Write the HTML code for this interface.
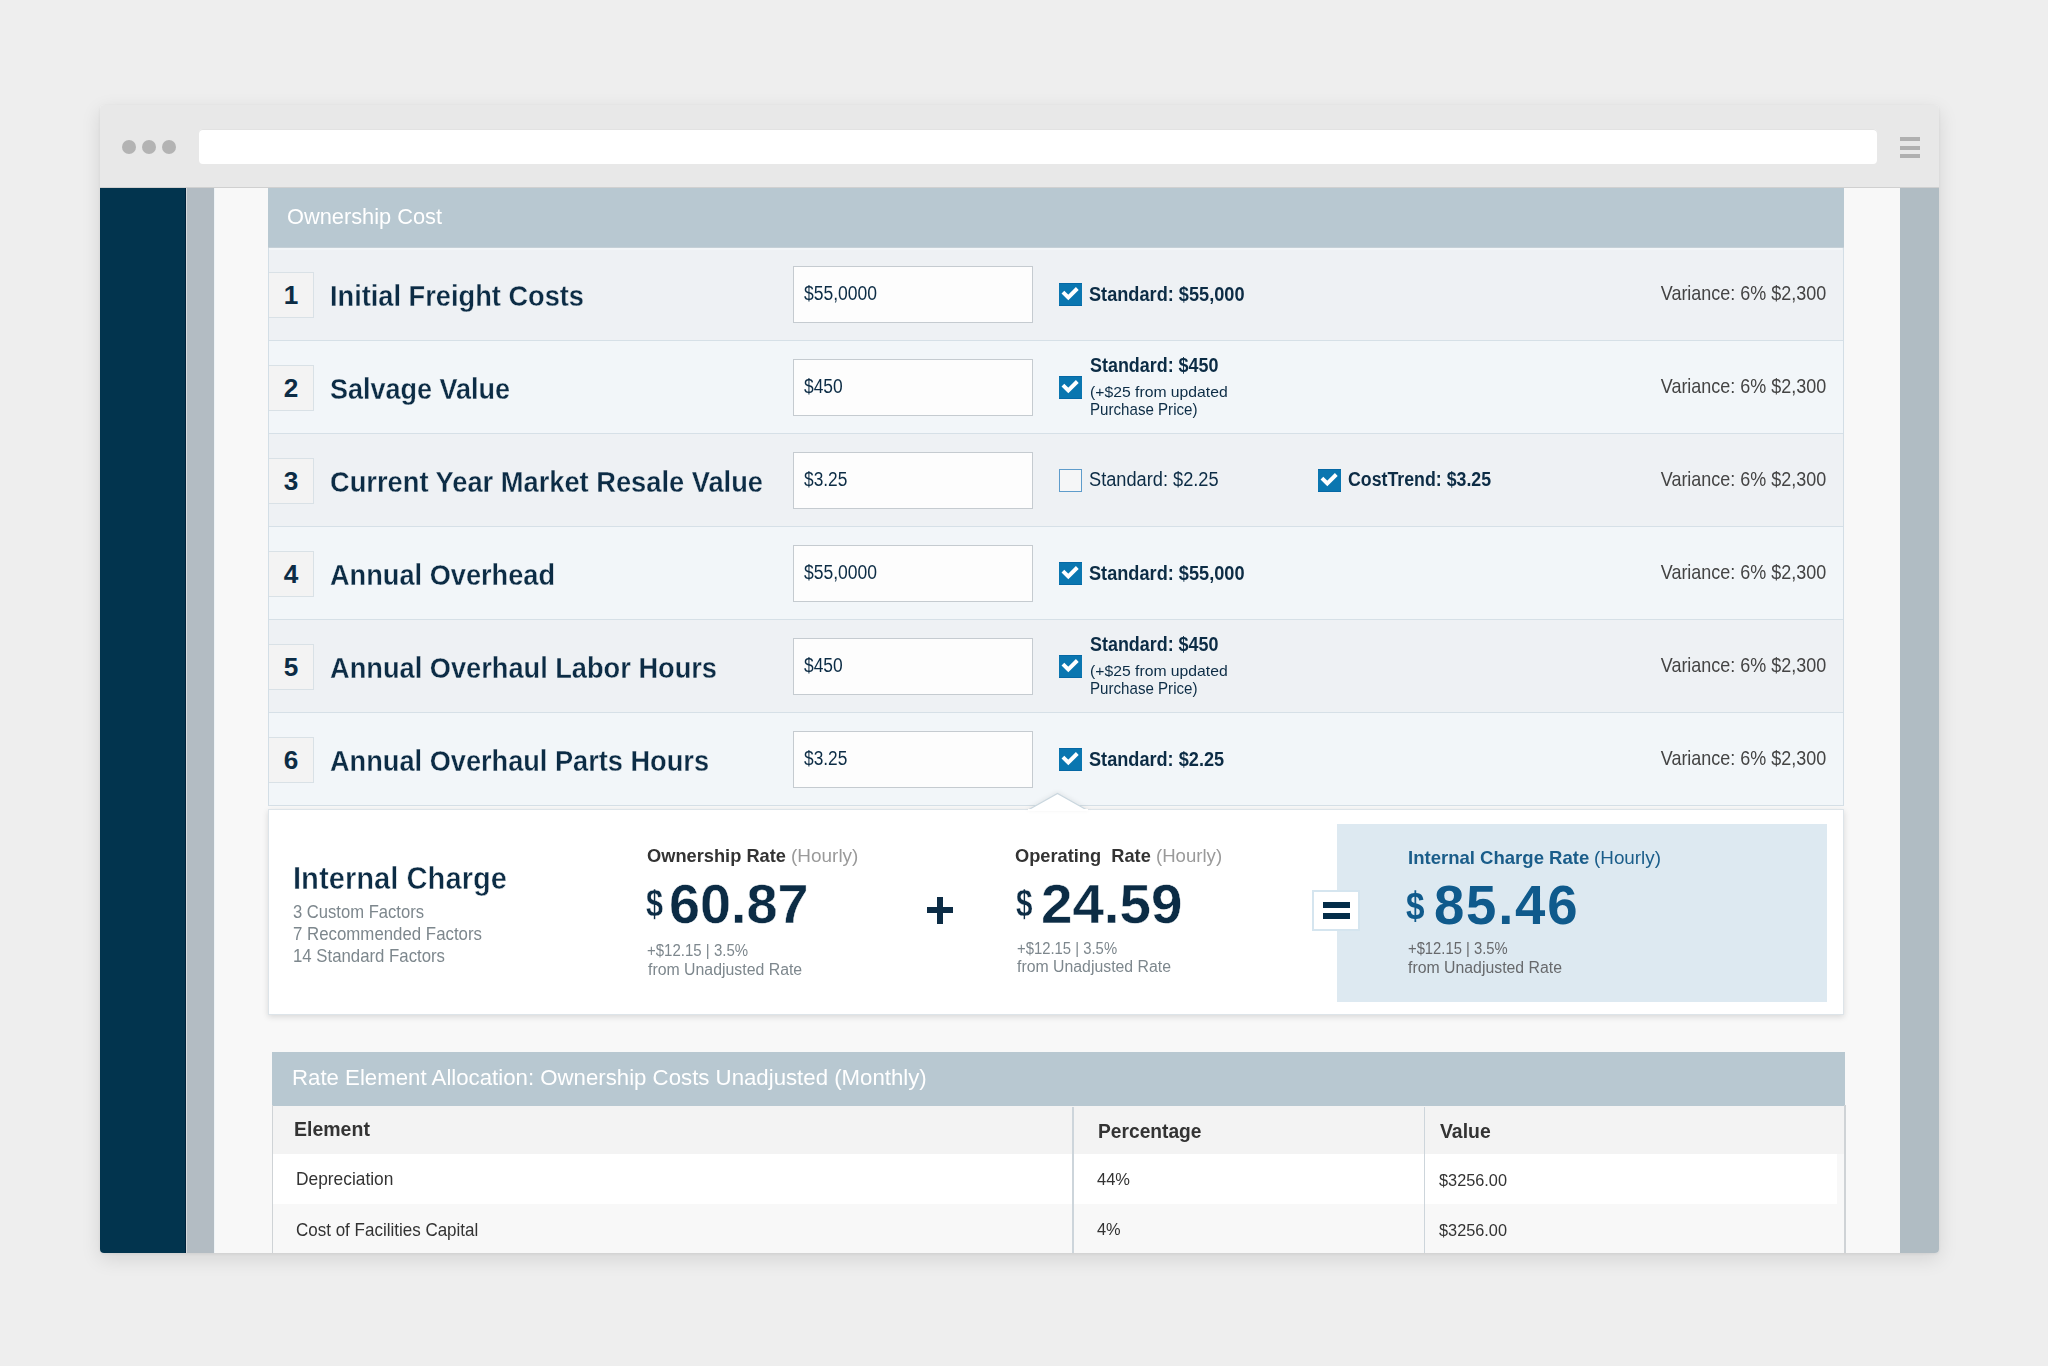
<!DOCTYPE html>
<html><head><meta charset="utf-8">
<style>
html,body{margin:0;padding:0}
body{width:2048px;height:1366px;overflow:hidden;background:#eeeeee;position:relative;font-family:"Liberation Sans",sans-serif}
.a{position:absolute}
.t{position:absolute;line-height:1;white-space:pre;font-family:"Liberation Sans",sans-serif}
.frame{position:absolute;left:100px;top:105px;width:1839px;height:1148px;border-radius:4px;overflow:hidden;background:#f8f8f8;box-shadow:0 6px 20px rgba(0,0,0,0.11),0 1px 3px rgba(0,0,0,0.06)}
.dot{position:absolute;width:14px;height:14px;border-radius:50%;background:#b3b3b3;top:139.5px}
.hb{position:absolute;left:1900px;width:20px;height:4px;background:#b0b0b0}
.row{position:absolute;left:268px;width:1576px;height:92px;border-bottom:1px solid #d6e0e7}
.odd{background:#eef1f4}
.even{background:#f2f6f9}
.nbox{position:absolute;left:268px;width:45px;height:44px;background:#f3f3f3;border:1px solid #d9e1e6;border-left:none}
.inp{position:absolute;left:793px;width:240px;height:57px;box-sizing:border-box;background:#fdfdfd;border:1px solid #c5cbd0}
.cb{position:absolute;width:23px;height:23px;background:#0a76b0;box-shadow:inset 0 1px #0568a5,inset 0 -1px #0568a5}
.cb svg{position:absolute;left:0;top:0}
.cbu{position:absolute;width:21px;height:21px;background:#f5f6f7;border:1px solid #5e9ccb}
</style></head><body>
<div class="frame"></div>
<!-- top bar -->
<div class="a" style="left:100px;top:105px;width:1839px;height:82px;background:#e8e8e8;border-radius:4px 4px 0 0"></div>
<div class="a" style="left:100px;top:187px;width:1839px;height:1px;background:#d0d0d0"></div>
<div class="dot" style="left:121.7px"></div>
<div class="dot" style="left:141.8px"></div>
<div class="dot" style="left:162px"></div>
<div class="a" style="left:199px;top:129px;width:1678px;height:35px;background:#ffffff;border-radius:4px;box-shadow:inset 0 1px 0 #e2e2e2"></div>
<div class="hb" style="top:137px"></div>
<div class="hb" style="top:145.5px"></div>
<div class="hb" style="top:154px"></div>
<!-- content columns -->
<div class="a" style="left:100px;top:188px;width:86px;height:1065px;background:#02344e;border-radius:0 0 0 4px"></div>
<div class="a" style="left:186px;top:188px;width:28px;height:1065px;background:#b3bcc3"></div>
<div class="a" style="left:185px;top:188px;width:1px;height:1065px;background:#00213a"></div>
<div class="a" style="left:186px;top:188px;width:1px;height:1065px;background:#d6dadd"></div>
<div class="a" style="left:214px;top:188px;width:1px;height:1065px;background:#eef3f6"></div>
<div class="a" style="left:1900px;top:188px;width:39px;height:1065px;background:#b0bcc3;border-radius:0 0 4px 0"></div>
<!-- panel -->
<div class="a" style="left:268px;top:188px;width:1576px;height:60px;background:#b8c8d1"></div>
<div class="row odd" style="top:248px"></div>
<div class="row even" style="top:341px"></div>
<div class="row odd" style="top:434px"></div>
<div class="row even" style="top:527px"></div>
<div class="row odd" style="top:620px"></div>
<div class="row even" style="top:713px"></div>
<!-- number boxes -->
<div class="nbox" style="top:272px"></div>
<div class="nbox" style="top:365px"></div>
<div class="nbox" style="top:458px"></div>
<div class="nbox" style="top:551px"></div>
<div class="nbox" style="top:644px"></div>
<div class="nbox" style="top:737px"></div>
<div class="a" style="left:268px;top:248px;width:1px;height:558px;background:#d3dee6"></div>
<div class="a" style="left:1843px;top:248px;width:1px;height:558px;background:#d3dee6"></div>
<div class="a" style="left:268px;top:247px;width:1576px;height:1px;background:#c5d0d7"></div>
<div class="a" style="left:269px;top:248px;width:1573px;height:1.5px;background:#f3f6f8"></div>
<!-- inputs -->
<div class="inp" style="top:266px"></div>
<div class="inp" style="top:359px"></div>
<div class="inp" style="top:452px"></div>
<div class="inp" style="top:545px"></div>
<div class="inp" style="top:638px"></div>
<div class="inp" style="top:731px"></div>
<!-- checkboxes -->
<div class="cb" style="left:1059px;top:283px"><svg width="23" height="23" viewBox="0 0 23 23"><path d="M3.9 9.1 L9.3 14.5 L18.3 5.5" fill="none" stroke="#ffffff" stroke-width="3.9" stroke-linecap="butt" stroke-linejoin="miter"/></svg></div>
<div class="cb" style="left:1059px;top:376px"><svg width="23" height="23" viewBox="0 0 23 23"><path d="M3.9 9.1 L9.3 14.5 L18.3 5.5" fill="none" stroke="#ffffff" stroke-width="3.9" stroke-linecap="butt" stroke-linejoin="miter"/></svg></div>
<div class="cbu" style="left:1059px;top:469px"></div>
<div class="cb" style="left:1318px;top:469px"><svg width="23" height="23" viewBox="0 0 23 23"><path d="M3.9 9.1 L9.3 14.5 L18.3 5.5" fill="none" stroke="#ffffff" stroke-width="3.9" stroke-linecap="butt" stroke-linejoin="miter"/></svg></div>
<div class="cb" style="left:1059px;top:562px"><svg width="23" height="23" viewBox="0 0 23 23"><path d="M3.9 9.1 L9.3 14.5 L18.3 5.5" fill="none" stroke="#ffffff" stroke-width="3.9" stroke-linecap="butt" stroke-linejoin="miter"/></svg></div>
<div class="cb" style="left:1059px;top:655px"><svg width="23" height="23" viewBox="0 0 23 23"><path d="M3.9 9.1 L9.3 14.5 L18.3 5.5" fill="none" stroke="#ffffff" stroke-width="3.9" stroke-linecap="butt" stroke-linejoin="miter"/></svg></div>
<div class="cb" style="left:1059px;top:748px"><svg width="23" height="23" viewBox="0 0 23 23"><path d="M3.9 9.1 L9.3 14.5 L18.3 5.5" fill="none" stroke="#ffffff" stroke-width="3.9" stroke-linecap="butt" stroke-linejoin="miter"/></svg></div>
<!-- card -->
<div class="a" style="left:268px;top:809px;width:1576px;height:206px;background:#ffffff;border:1px solid #dde4e9;box-sizing:border-box;box-shadow:0 2px 6px rgba(0,0,0,0.13)"></div>
<svg class="a" style="left:1028px;top:792px;filter:drop-shadow(0 -1px 2px rgba(0,0,0,0.07))" width="60" height="19" viewBox="0 0 60 19"><path d="M1 17.5 L29.5 1.5 L58 17.5" fill="#ffffff" stroke="#c9d6de" stroke-width="1.2"/><rect x="0" y="17" width="60" height="2" fill="#ffffff"/></svg>
<div class="a" style="left:1337px;top:824px;width:490px;height:178px;background:#dde9f1"></div>
<div class="a" style="left:926.7px;top:906.5px;width:26.6px;height:6.5px;background:#0c2c45"></div>
<div class="a" style="left:936.9px;top:896.5px;width:6.3px;height:27px;background:#0c2c45"></div>
<div class="a" style="left:1312px;top:890px;width:44px;height:37px;background:#ffffff;border:2px solid #d5e5ef"></div>
<div class="a" style="left:1323px;top:901.7px;width:27px;height:6px;background:#032c48"></div>
<div class="a" style="left:1323px;top:913px;width:27px;height:6px;background:#032c48"></div>
<!-- table -->
<div class="a" style="left:272px;top:1052px;width:1573px;height:53.5px;background:#b8c8d1"></div>
<div class="a" style="left:272px;top:1105.5px;width:1573px;height:48.5px;background:#f3f3f3"></div>
<div class="a" style="left:272px;top:1154px;width:1565px;height:50.4px;background:#ffffff"></div>
<div class="a" style="left:272px;top:1204px;width:1573px;height:49px;background:#f8f8f8"></div>
<div class="a" style="left:271.5px;top:1105px;width:1.5px;height:148px;background:#cfd3d6"></div>
<div class="a" style="left:1844px;top:1105px;width:1.5px;height:148px;background:#cfd3d6"></div>
<div class="a" style="left:1072px;top:1107px;width:1.5px;height:146px;background:#cdd5db"></div>
<div class="a" style="left:1423.5px;top:1107px;width:1.5px;height:146px;background:#cdd5db"></div>
<div class="t" style="left:286.70px;top:206.44px;font-size:21.80px;font-weight:400;color:#ffffff;transform:scaleX(0.9996);transform-origin:0 0">Ownership Cost</div>
<div class="t" style="left:330.00px;top:280.73px;font-size:30.09px;font-weight:700;color:#0c2c45;transform:scaleX(0.9047);transform-origin:0 0;-webkit-text-stroke:0.3px #eef1f4">Initial Freight Costs</div>
<div class="t" style="left:283.73px;top:281.85px;font-size:26.16px;font-weight:700;color:#0c2c45">1</div>
<div class="t" style="left:804.00px;top:282.16px;font-size:21.08px;font-weight:400;color:#0c2c45;transform:scaleX(0.8309);transform-origin:0 0">$55,0000</div>
<div class="t" style="left:1635.25px;top:283.11px;font-size:20.78px;font-weight:400;color:#444444;transform:scaleX(0.8654);transform-origin:100% 0">Variance: 6% $2,300</div>
<div class="t" style="left:330.00px;top:373.73px;font-size:30.09px;font-weight:700;color:#0c2c45;transform:scaleX(0.8971);transform-origin:0 0;-webkit-text-stroke:0.3px #f2f6f9">Salvage Value</div>
<div class="t" style="left:283.73px;top:374.85px;font-size:26.16px;font-weight:700;color:#0c2c45">2</div>
<div class="t" style="left:804.00px;top:375.16px;font-size:21.08px;font-weight:400;color:#0c2c45;transform:scaleX(0.8259);transform-origin:0 0">$450</div>
<div class="t" style="left:1635.25px;top:376.11px;font-size:20.78px;font-weight:400;color:#444444;transform:scaleX(0.8654);transform-origin:100% 0">Variance: 6% $2,300</div>
<div class="t" style="left:330.00px;top:466.73px;font-size:30.09px;font-weight:700;color:#0c2c45;transform:scaleX(0.9066);transform-origin:0 0;-webkit-text-stroke:0.3px #eef1f4">Current Year Market Resale Value</div>
<div class="t" style="left:283.73px;top:467.85px;font-size:26.16px;font-weight:700;color:#0c2c45">3</div>
<div class="t" style="left:804.00px;top:468.16px;font-size:21.08px;font-weight:400;color:#0c2c45;transform:scaleX(0.8213);transform-origin:0 0">$3.25</div>
<div class="t" style="left:1635.25px;top:469.11px;font-size:20.78px;font-weight:400;color:#444444;transform:scaleX(0.8654);transform-origin:100% 0">Variance: 6% $2,300</div>
<div class="t" style="left:330.00px;top:559.73px;font-size:30.09px;font-weight:700;color:#0c2c45;transform:scaleX(0.9034);transform-origin:0 0;-webkit-text-stroke:0.3px #f2f6f9">Annual Overhead</div>
<div class="t" style="left:283.73px;top:560.85px;font-size:26.16px;font-weight:700;color:#0c2c45">4</div>
<div class="t" style="left:804.00px;top:561.16px;font-size:21.08px;font-weight:400;color:#0c2c45;transform:scaleX(0.8309);transform-origin:0 0">$55,0000</div>
<div class="t" style="left:1635.25px;top:562.11px;font-size:20.78px;font-weight:400;color:#444444;transform:scaleX(0.8654);transform-origin:100% 0">Variance: 6% $2,300</div>
<div class="t" style="left:330.00px;top:652.73px;font-size:30.09px;font-weight:700;color:#0c2c45;transform:scaleX(0.9045);transform-origin:0 0;-webkit-text-stroke:0.3px #eef1f4">Annual Overhaul Labor Hours</div>
<div class="t" style="left:283.73px;top:653.85px;font-size:26.16px;font-weight:700;color:#0c2c45">5</div>
<div class="t" style="left:804.00px;top:654.16px;font-size:21.08px;font-weight:400;color:#0c2c45;transform:scaleX(0.8259);transform-origin:0 0">$450</div>
<div class="t" style="left:1635.25px;top:655.11px;font-size:20.78px;font-weight:400;color:#444444;transform:scaleX(0.8654);transform-origin:100% 0">Variance: 6% $2,300</div>
<div class="t" style="left:330.00px;top:745.73px;font-size:30.09px;font-weight:700;color:#0c2c45;transform:scaleX(0.9034);transform-origin:0 0;-webkit-text-stroke:0.3px #f2f6f9">Annual Overhaul Parts Hours</div>
<div class="t" style="left:283.73px;top:746.85px;font-size:26.16px;font-weight:700;color:#0c2c45">6</div>
<div class="t" style="left:804.00px;top:747.16px;font-size:21.08px;font-weight:400;color:#0c2c45;transform:scaleX(0.8213);transform-origin:0 0">$3.25</div>
<div class="t" style="left:1635.25px;top:748.11px;font-size:20.78px;font-weight:400;color:#444444;transform:scaleX(0.8654);transform-origin:100% 0">Variance: 6% $2,300</div>
<div class="t" style="left:1089.30px;top:283.57px;font-size:20.35px;font-weight:700;color:#0c2c45;transform:scaleX(0.8930);transform-origin:0 0">Standard: $55,000</div>
<div class="t" style="left:1089.50px;top:355.71px;font-size:19.48px;font-weight:700;color:#0c2c45;transform:scaleX(0.9205);transform-origin:0 0">Standard: $450</div>
<div class="t" style="left:1089.60px;top:384.26px;font-size:15.41px;font-weight:400;color:#0c2c45;transform:scaleX(1.0210);transform-origin:0 0">(+$25 from updated</div>
<div class="t" style="left:1089.60px;top:402.31px;font-size:15.70px;font-weight:400;color:#0c2c45;transform:scaleX(0.9632);transform-origin:0 0">Purchase Price)</div>
<div class="t" style="left:1089.30px;top:468.97px;font-size:20.35px;font-weight:400;color:#0c2c45;transform:scaleX(0.8951);transform-origin:0 0">Standard: $2.25</div>
<div class="t" style="left:1348.00px;top:468.97px;font-size:20.35px;font-weight:700;color:#0c2c45;transform:scaleX(0.8729);transform-origin:0 0">CostTrend: $3.25</div>
<div class="t" style="left:1089.30px;top:562.57px;font-size:20.35px;font-weight:700;color:#0c2c45;transform:scaleX(0.8930);transform-origin:0 0">Standard: $55,000</div>
<div class="t" style="left:1089.50px;top:634.71px;font-size:19.48px;font-weight:700;color:#0c2c45;transform:scaleX(0.9205);transform-origin:0 0">Standard: $450</div>
<div class="t" style="left:1089.60px;top:663.26px;font-size:15.41px;font-weight:400;color:#0c2c45;transform:scaleX(1.0210);transform-origin:0 0">(+$25 from updated</div>
<div class="t" style="left:1089.60px;top:681.31px;font-size:15.70px;font-weight:400;color:#0c2c45;transform:scaleX(0.9632);transform-origin:0 0">Purchase Price)</div>
<div class="t" style="left:1089.30px;top:748.57px;font-size:20.35px;font-weight:700;color:#0c2c45;transform:scaleX(0.8917);transform-origin:0 0">Standard: $2.25</div>
<div class="t" style="left:293.00px;top:862.92px;font-size:31.40px;font-weight:700;color:#0c2c45;transform:scaleX(0.9299);transform-origin:0 0;-webkit-text-stroke:0.5px #ffffff">Internal Charge</div>
<div class="t" style="left:293.00px;top:903.14px;font-size:18.02px;font-weight:400;color:#7d878d;transform:scaleX(0.9214);transform-origin:0 0">3 Custom Factors</div>
<div class="t" style="left:293.00px;top:925.04px;font-size:18.02px;font-weight:400;color:#7d878d;transform:scaleX(0.9344);transform-origin:0 0">7 Recommended Factors</div>
<div class="t" style="left:293.00px;top:946.64px;font-size:18.02px;font-weight:400;color:#7d878d;transform:scaleX(0.9312);transform-origin:0 0">14 Standard Factors</div>
<div class="t" style="left:647.00px;top:847.25px;font-size:18.60px;font-weight:700;color:#333333;transform:scaleX(0.9819);transform-origin:0 0">Ownership Rate</div>
<div class="t" style="left:791.40px;top:847.25px;font-size:18.60px;font-weight:400;color:#9a9a9a;transform:scaleX(1.0193);transform-origin:0 0">(Hourly)</div>
<div class="t" style="left:646.00px;top:885.43px;font-size:37.06px;font-weight:700;color:#0c2c45;transform:scaleX(0.8249);transform-origin:0 0;-webkit-text-stroke:0.3px #ffffff">$</div>
<div class="t" style="left:669.00px;top:876.38px;font-size:56.25px;font-weight:700;color:#0c2c45;transform:scaleX(0.9910);transform-origin:0 0;-webkit-text-stroke:0.4px #ffffff">60.87</div>
<div class="t" style="left:647.00px;top:943.17px;font-size:15.99px;font-weight:400;color:#7d878d;transform:scaleX(0.9387);transform-origin:0 0">+$12.15 | 3.5%</div>
<div class="t" style="left:647.50px;top:960.90px;font-size:16.42px;font-weight:400;color:#7d878d;transform:scaleX(0.9662);transform-origin:0 0">from Unadjusted Rate</div>
<div class="t" style="left:1015.00px;top:847.25px;font-size:18.60px;font-weight:700;color:#333333;transform:scaleX(0.9808);transform-origin:0 0">Operating  Rate</div>
<div class="t" style="left:1156.40px;top:847.25px;font-size:18.60px;font-weight:400;color:#9a9a9a;transform:scaleX(0.9996);transform-origin:0 0">(Hourly)</div>
<div class="t" style="left:1015.50px;top:885.43px;font-size:37.06px;font-weight:700;color:#0c2c45;transform:scaleX(0.8006);transform-origin:0 0;-webkit-text-stroke:0.3px #ffffff">$</div>
<div class="t" style="left:1040.60px;top:876.38px;font-size:56.25px;font-weight:700;color:#0c2c45;transform:scaleX(1.0045);transform-origin:0 0;-webkit-text-stroke:0.4px #ffffff">24.59</div>
<div class="t" style="left:1017.00px;top:940.77px;font-size:15.99px;font-weight:400;color:#7d878d;transform:scaleX(0.9294);transform-origin:0 0">+$12.15 | 3.5%</div>
<div class="t" style="left:1017.00px;top:958.10px;font-size:16.42px;font-weight:400;color:#7d878d;transform:scaleX(0.9650);transform-origin:0 0">from Unadjusted Rate</div>
<div class="t" style="left:1407.70px;top:848.65px;font-size:18.60px;font-weight:700;color:#1a5d8a;transform:scaleX(0.9969);transform-origin:0 0">Internal Charge Rate</div>
<div class="t" style="left:1594.00px;top:848.65px;font-size:18.60px;font-weight:400;color:#1a5d8a;transform:scaleX(1.0132);transform-origin:0 0">(Hourly)</div>
<div class="t" style="left:1406.00px;top:886.28px;font-size:39.24px;font-weight:700;color:#0f5a8c;transform:scaleX(0.8475);transform-origin:0 0">$</div>
<div class="t" style="left:1433.50px;top:878.08px;font-size:55.67px;font-weight:700;color:#0f5a8c;transform:scaleX(0.9799);transform-origin:0 0;letter-spacing:1.8px">85.46</div>
<div class="t" style="left:1408.00px;top:940.87px;font-size:15.99px;font-weight:400;color:#67696c;transform:scaleX(0.9257);transform-origin:0 0">+$12.15 | 3.5%</div>
<div class="t" style="left:1408.00px;top:959.10px;font-size:16.42px;font-weight:400;color:#67696c;transform:scaleX(0.9650);transform-origin:0 0">from Unadjusted Rate</div>
<div class="t" style="left:292.30px;top:1067.18px;font-size:22.24px;font-weight:400;color:#ffffff;transform:scaleX(0.9993);transform-origin:0 0">Rate Element Allocation: Ownership Costs Unadjusted (Monthly)</div>
<div class="t" style="left:293.60px;top:1119.40px;font-size:20.20px;font-weight:700;color:#333333;transform:scaleX(0.9663);transform-origin:0 0">Element</div>
<div class="t" style="left:1098.00px;top:1120.60px;font-size:20.20px;font-weight:700;color:#333333;transform:scaleX(0.9509);transform-origin:0 0">Percentage</div>
<div class="t" style="left:1440.00px;top:1120.60px;font-size:20.20px;font-weight:700;color:#333333;transform:scaleX(0.9611);transform-origin:0 0">Value</div>
<div class="t" style="left:296.40px;top:1169.82px;font-size:18.17px;font-weight:400;color:#333333;transform:scaleX(0.9555);transform-origin:0 0">Depreciation</div>
<div class="t" style="left:296.40px;top:1220.62px;font-size:18.17px;font-weight:400;color:#333333;transform:scaleX(0.9361);transform-origin:0 0">Cost of Facilities Capital</div>
<div class="t" style="left:1096.50px;top:1171.85px;font-size:16.72px;font-weight:400;color:#333333;transform:scaleX(0.9869);transform-origin:0 0">44%</div>
<div class="t" style="left:1096.50px;top:1222.35px;font-size:16.72px;font-weight:400;color:#333333;transform:scaleX(0.9811);transform-origin:0 0">4%</div>
<div class="t" style="left:1439.00px;top:1172.75px;font-size:16.72px;font-weight:400;color:#333333;transform:scaleX(0.9760);transform-origin:0 0">$3256.00</div>
<div class="t" style="left:1439.00px;top:1222.85px;font-size:16.72px;font-weight:400;color:#333333;transform:scaleX(0.9760);transform-origin:0 0">$3256.00</div>
</body></html>
